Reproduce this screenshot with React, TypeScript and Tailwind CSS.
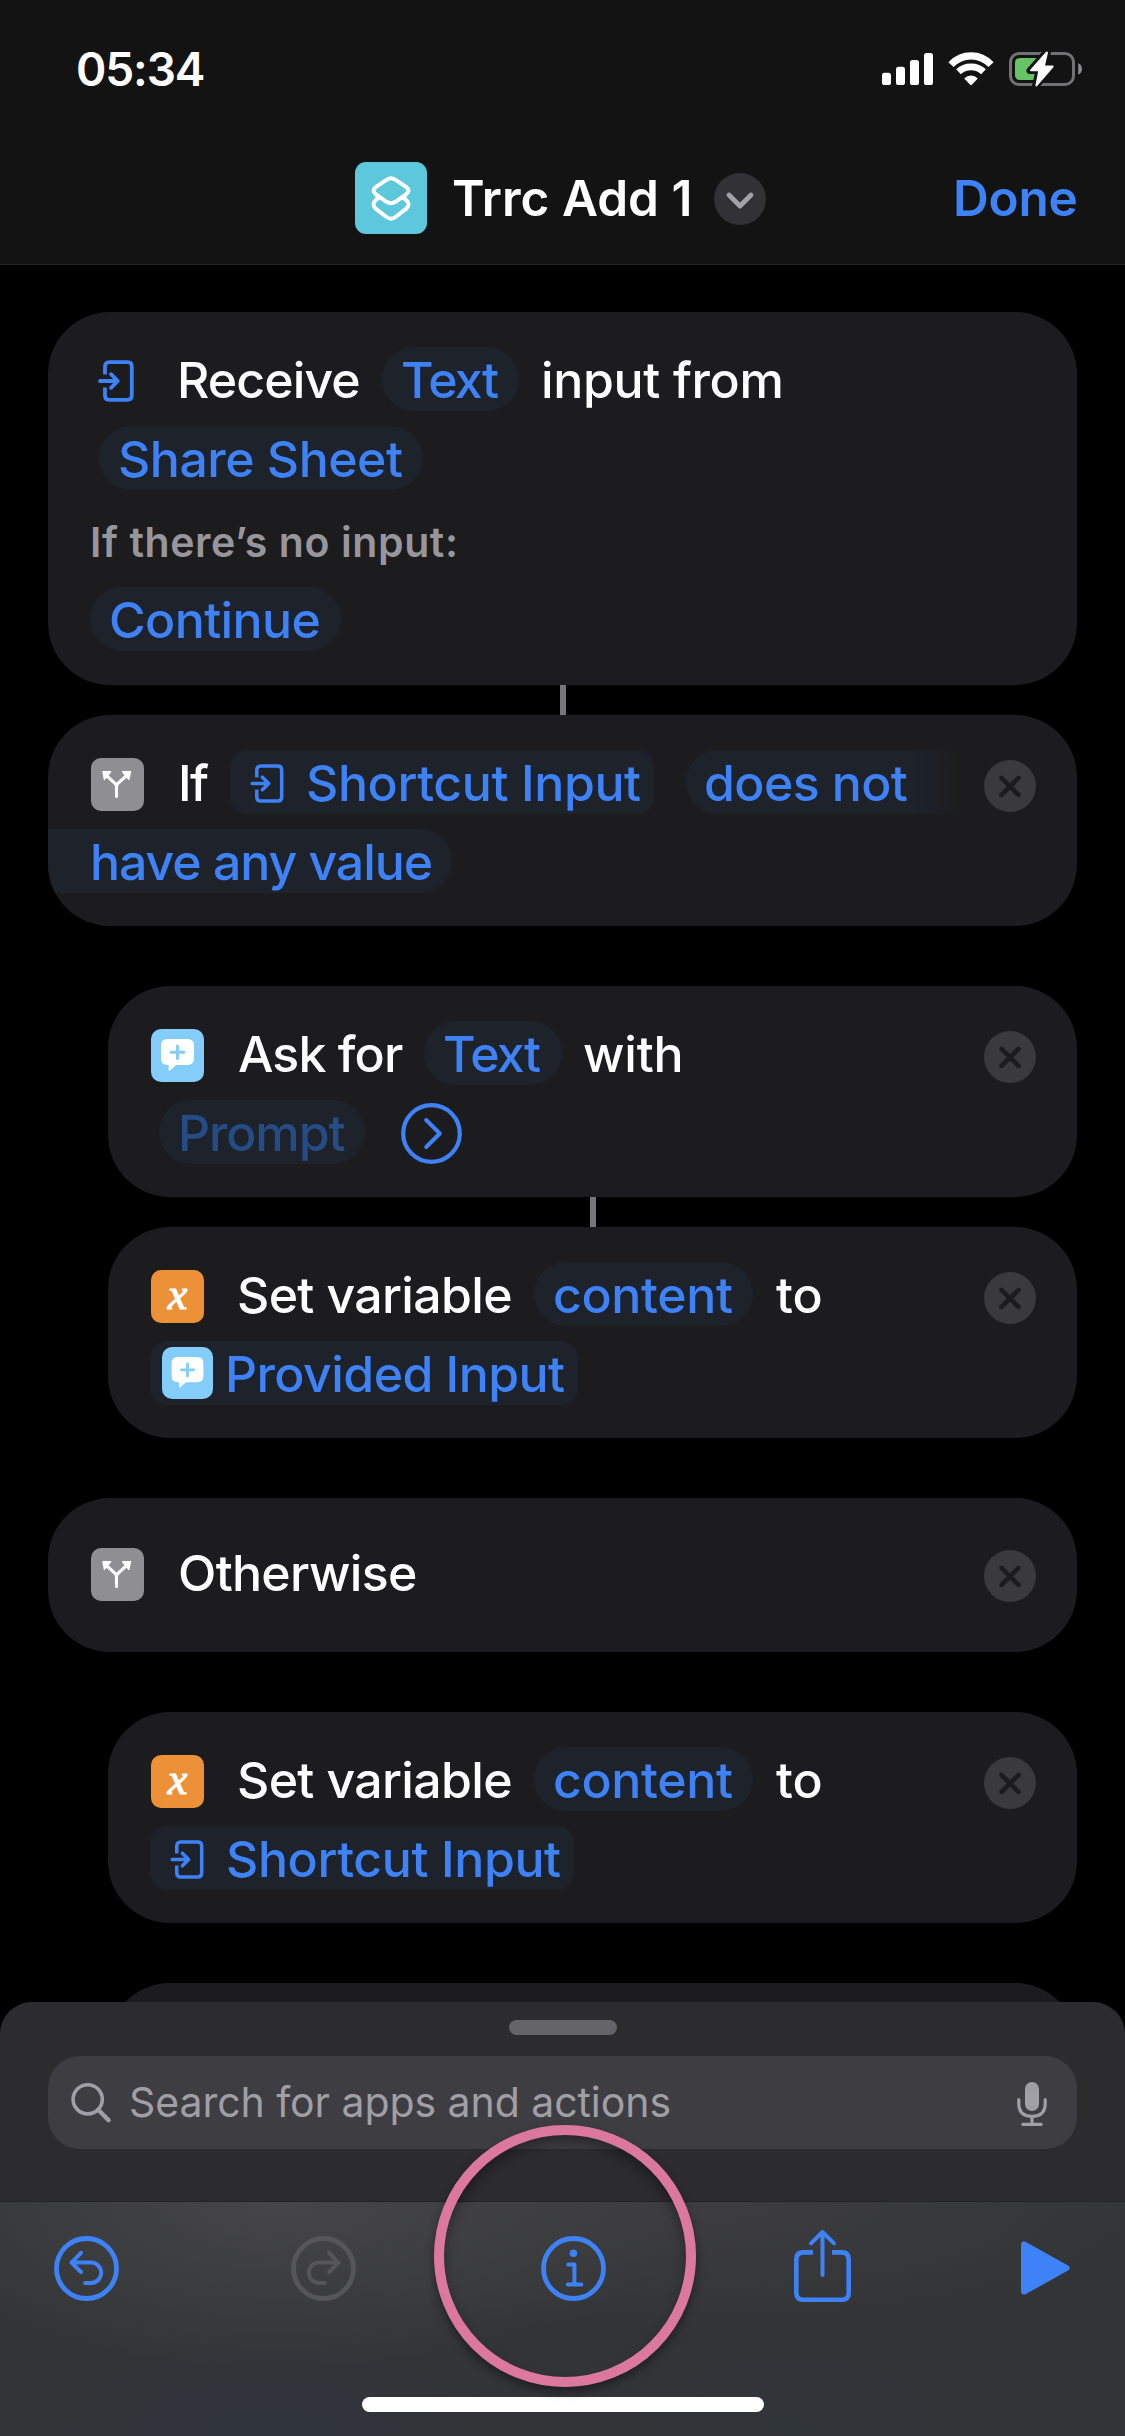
import type { ReactNode } from 'react';

/* ---------- glyphs ---------- */

function InputGlyph({ className }: { className: string }) {
  return (
    <svg viewBox="0 0 36 42" fill="none" stroke="#3e82f7" strokeWidth="3.8" strokeLinecap="round" strokeLinejoin="round" className={className}>
      <path d="M7 14.5V6.5Q7 2.2 11.3 2.2H29.5Q33.8 2.2 33.8 6.5V35.5Q33.8 39.8 29.5 39.8H11.3Q7 39.8 7 35.5V27.5" strokeLinecap="butt" />
      <path d="M2 21H19M13 14.2L19.8 21L13 27.8" />
    </svg>
  );
}

function BranchTile() {
  return (
    <svg viewBox="0 0 53 53" className="mt-[5px] h-[53px] w-[53px] shrink-0 rounded-[10px] bg-[#8e8e93]">
      <path d="M25.5 38.5V28.5Q25.3 26.8 24 25.4L16.5 18.5M25.5 28.5Q25.7 26.8 27 25.4L34.5 18.5" fill="none" stroke="#fff" strokeWidth="3.1" strokeLinecap="round" />
      <path d="M12 13.8H19.6L13.4 21.4Z M39.5 13.8H31.6L37.8 21.4Z" fill="#fff" stroke="#fff" strokeWidth="1.4" strokeLinejoin="round" />
    </svg>
  );
}

function AskTile({ className }: { className: string }) {
  return (
    <svg viewBox="0 0 53 53" className={className}>
      <path d="M16.5 10H36.5Q43 10 43 16.5V29.5Q43 36 36.5 36H25L19 41.4Q17.6 42.4 17.6 40.6V36H16.5Q10 36 10 29.5V16.5Q10 10 16.5 10Z" fill="#fff" />
      <path d="M26.5 17V29.6M20.2 23.3H32.8" stroke="#84cdfb" strokeWidth="3" strokeLinecap="round" />
    </svg>
  );
}

function VariableTile() {
  return (
    <span className="mt-[5px] flex h-[53px] w-[53px] shrink-0 items-center justify-center rounded-[10px] bg-[#ec9138] pb-1 font-['Liberation_Serif',serif] text-[44px] leading-[44px] font-normal text-white italic [-webkit-text-stroke:1.2px_white]">
      x
    </span>
  );
}

function CloseButton() {
  return (
    <svg viewBox="0 0 52 52" className="mt-2 mr-[41px] ml-auto h-[52px] w-[52px] shrink-0">
      <circle cx="26" cy="26" r="26" fill="#3a3a3d" />
      <path d="M17.5 17.9L34.5 34.9M34.5 17.9L17.5 34.9" stroke="#1c1c1e" strokeWidth="4.6" strokeLinecap="round" />
    </svg>
  );
}

/* ---------- building blocks ---------- */

function Card({ className = '', children }: { className?: string; children?: ReactNode }) {
  return <section className={`flex flex-col gap-[15px] overflow-hidden rounded-[62px] bg-[#1c1c1e] pt-[35px] ${className}`}>{children}</section>;
}

function Row({ className = '', children }: { className?: string; children: ReactNode }) {
  return <div className={`flex h-16 items-center ${className}`}>{children}</div>;
}

function Label({ className, children }: { className: string; children: ReactNode }) {
  return <span className={`h-16 shrink-0 leading-[66px] ${className}`}>{children}</span>;
}

function Pill({ className, children }: { className: string; children: ReactNode }) {
  return <span className={`flex h-16 shrink-0 items-center bg-[#1d222b] pt-[2px] leading-[62px] text-[#3e82f7] ${className}`}>{children}</span>;
}

function Connector({ className }: { className: string }) {
  return <div className={`h-[30px] w-[6px] bg-[#76767b] ${className}`} />;
}

/* ---------- page sections ---------- */

function Header() {
  return (
    <header className="flex h-[265px] shrink-0 flex-col border-b border-[#242425] bg-[#131313] pt-[39px]">
      <div className="flex h-[60px] pl-[76px]">
        <span className="w-[806px] text-[46px] leading-[60px] font-[560] tracking-[-1.1px]">05:34</span>
        <svg viewBox="0 0 52 36" className="mt-3 h-9 w-[52px]" fill="#fff">
          <rect x="0" y="21.7" width="9" height="12.3" rx="2.6" />
          <rect x="14" y="15.7" width="9" height="18.3" rx="2.6" />
          <rect x="28" y="9" width="9" height="25" rx="2.6" />
          <rect x="42" y="2" width="9" height="32" rx="2.6" />
        </svg>
        <svg viewBox="0 0 46 34" className="mt-[13px] ml-[14px] h-[34px] w-[46px]" fill="none" stroke="#fff">
          <path d="M3 12.6Q11.3 3.8 23 3.8T43 12.6" strokeWidth="7.2" />
          <path d="M10.5 19.8Q15.6 14.8 23 14.8T35.5 19.8" strokeWidth="6.8" />
          <path d="M16.2 26.6Q19 23.6 23 23.6T29.8 26.6L23.8 32.8Q23 33.5 22.2 32.8Z" fill="#fff" stroke="none" />
        </svg>
        <svg viewBox="0 0 76 40" className="mt-[10px] ml-[14px] h-10 w-[76px]">
          <rect x="2.5" y="4.5" width="63" height="31" rx="8.5" fill="none" stroke="#727274" strokeWidth="3" />
          <path d="M70.2 14.2Q74 16 74 20T70.2 25.8Z" fill="#8a8a8c" />
          <path d="M12 9H30V31H12Q7 31 7 26V14Q7 9 12 9Z" fill="#66c466" />
          <path d="M38.6 3L22 21.6H31L27.6 36.8L45.6 17.4H36.2L39.4 3.4Z" fill="#fff" stroke="#131313" strokeWidth="7" strokeLinejoin="round" />
          <path d="M38.6 3.6L23 21.3H31.4L28.4 36.4L44.6 17.6H35.8L39 3.6Z" fill="#fff" stroke="#fff" strokeWidth="2" strokeLinejoin="round" />
        </svg>
      </div>
      <div className="mt-[63px] flex h-[72px] items-center pl-[355px] text-[49.5px] leading-[74px] font-semibold whitespace-nowrap">
        <svg viewBox="0 0 72 72" className="h-[72px] w-[72px] shrink-0 rounded-[11px] bg-[#5dc8dc]" fill="none" stroke="#fff" strokeWidth="4" strokeLinejoin="round">
          <path d="M31.5 17.8Q36 14.8 40.5 17.8L51 24.8Q56 28.5 51 32.5L40.5 39.8Q36 42.6 31.5 39.8L21 32.5Q16 28.5 21 24.8Z" />
          <path d="M24.5 35.2L20.6 38.2Q16.3 42.2 20.6 46.6L31.5 55Q36 58.4 40.5 55L51.4 46.6Q55.7 42.2 51.4 38.2L47.5 35.2" />
        </svg>
        <span className="ml-[25px] w-[262px] shrink-0 font-[570]">Trrc Add 1</span>
        <svg viewBox="0 0 52 52" className="mt-[2px] h-[52px] w-[52px] shrink-0">
          <circle cx="26" cy="26" r="26" fill="#323236" />
          <path d="M15 22L26 33L37 22" fill="none" stroke="#a2a1a7" strokeWidth="4.8" strokeLinecap="round" strokeLinejoin="round" />
        </svg>
        <span className="ml-[187px] h-[74px] font-[580] tracking-[-0.2px] text-[#3e82f7]">Done</span>
      </div>
    </header>
  );
}

function Flow() {
  return (
    <main className="flex h-[1737px] shrink-0 flex-col overflow-hidden px-12 pt-[47px] text-[50px] font-medium whitespace-nowrap">
      <Card className="h-[373px] shrink-0">
        <Row className="pl-[50px]">
          <InputGlyph className="mt-[4px] mr-[43px] h-[42px] w-9 shrink-0" />
          <Label className="w-[205px] tracking-[-0.9px]">Receive</Label>
          <Pill className="w-[137px] rounded-[32px] pl-[19px] tracking-[-1.6px]">Text</Pill>
          <Label className="ml-[22px] tracking-[-0.35px]">input from</Label>
        </Row>
        <Row className="pl-[51px]">
          <Pill className="w-[324px] rounded-[32px] pl-[19px] tracking-[-0.5px]">Share Sheet</Pill>
        </Row>
        <div className="h-[67px] pl-[42px] text-[41px] leading-[75px] font-semibold tracking-[0.6px] text-[#97969c]">If there’s no input:</div>
        <Row className="pl-[42px]">
          <Pill className="w-[251px] rounded-[32px] pl-[19px] tracking-[-0.6px]">Continue</Pill>
        </Row>
      </Card>
      <Connector className="ml-[512px] shrink-0" />
      <Card className="h-[211px] shrink-0">
        <Row className="pl-[43px]">
          <BranchTile />
          <Label className="ml-[34px] w-[52px] tracking-[-1.6px]">If</Label>
          <Pill className="w-[424px] rounded-[17px] pl-5 tracking-[-0.4px]">
            <InputGlyph className="mr-[22px] h-[39px] w-[34px] shrink-0" />
            Shortcut Input
          </Pill>
          <Pill className="ml-8 w-[276px] rounded-l-[32px] bg-transparent bg-linear-to-r from-[#1d222b] from-82% to-[#1c1c1e] pl-[18px] tracking-[-0.6px]">does not</Pill>
          <CloseButton />
        </Row>
        <Row>
          <Pill className="w-[404px] rounded-r-[32px] pl-[42px] tracking-[-1.05px]">have any value</Pill>
        </Row>
      </Card>
      <Card className="mt-[60px] ml-[60px] h-[211px] shrink-0">
        <Row className="pl-[43px]">
          <AskTile className="mt-[5px] h-[53px] w-[53px] shrink-0 rounded-[10px] bg-[#84cdfb]" />
          <Label className="ml-[34px] w-[186px] tracking-[-0.9px]">Ask for</Label>
          <Pill className="w-[138px] rounded-[32px] pl-[19px] tracking-[-1.6px]">Text</Pill>
          <Label className="ml-[21px] tracking-[-0.2px]">with</Label>
          <CloseButton />
        </Row>
        <Row className="pl-[51px]">
          <Pill className="w-[206px] rounded-[32px] pl-[19px] tracking-[-1.1px]">
            <span className="text-[#264c85]">Prompt</span>
          </Pill>
          <svg viewBox="0 0 61 61" className="mt-[2px] ml-9 h-[61px] w-[61px]" fill="none" stroke="#3e82f7" strokeLinecap="round" strokeLinejoin="round">
            <circle cx="30.5" cy="30.5" r="28.3" strokeWidth="4.2" />
            <path d="M25.2 17L38.8 30.5L25.2 44" strokeWidth="4" />
          </svg>
        </Row>
      </Card>
      <Connector className="ml-[542px] shrink-0" />
      <Card className="ml-[60px] h-[211px] shrink-0">
        <SetVariableRow />
        <Row className="pl-[42px]">
          <Pill className="w-[428px] rounded-[17px] pl-3 tracking-[-0.55px]">
            <AskTile className="-mt-[2px] mr-3 h-[52px] w-[51px] shrink-0 rounded-[10px] bg-[#84cdfb]" />
            Provided Input
          </Pill>
        </Row>
      </Card>
      <Card className="mt-[60px] h-[154px] shrink-0 pt-[42px]!">
        <Row className="pl-[43px]">
          <BranchTile />
          <Label className="ml-[34px] tracking-[-0.7px]">Otherwise</Label>
          <CloseButton />
        </Row>
      </Card>
      <Card className="mt-[60px] ml-[60px] h-[211px] shrink-0">
        <SetVariableRow />
        <Row className="pl-[42px]">
          <Pill className="w-[424px] rounded-[17px] pl-5 tracking-[-0.4px]">
            <InputGlyph className="mr-[22px] h-[39px] w-[34px] shrink-0" />
            Shortcut Input
          </Pill>
        </Row>
      </Card>
      <Card className="mt-[60px] ml-[60px] h-[211px] shrink-0" />
    </main>
  );
}

function SetVariableRow() {
  return (
    <Row className="pl-[43px]">
      <VariableTile />
      <Label className="ml-[33px] w-[297px] tracking-[-0.65px]">Set variable</Label>
      <Pill className="w-[219px] rounded-[32px] pl-[19px] tracking-[-0.35px]">content</Pill>
      <Label className="ml-[23px]">to</Label>
      <CloseButton />
    </Row>
  );
}

function SearchSheet() {
  return (
    <div className="flex h-[199px] shrink-0 flex-col rounded-t-[32px] bg-[#2c2c2e] px-12 pt-[18px]">
      <div className="h-[15px] w-[108px] self-center rounded-full bg-[#656469]" />
      <div className="mt-[21px] flex h-[93px] shrink-0 items-center rounded-[32px] bg-[#3e3d42] text-[41px] leading-[93px] whitespace-nowrap text-[#a09fa6]">
        <svg viewBox="0 0 42 42" className="ml-[22px] h-[42px] w-[42px] shrink-0" fill="none" stroke="#a09fa6" strokeWidth="3.6">
          <circle cx="17.7" cy="17.3" r="14.6" />
          <path d="M28.3 27.8L38.6 38.2" strokeWidth="4.4" strokeLinecap="round" />
        </svg>
        <span className="ml-[17px] tracking-[-0.06px]">Search for apps and actions</span>
        <svg viewBox="0 0 30 44" className="mt-[3px] mr-[30px] ml-auto h-11 w-[30px]" fill="none" stroke="#a09fa6" strokeWidth="3.2" strokeLinecap="round">
          <rect x="8" y="0" width="14" height="29" rx="7" fill="#a09fa6" stroke="none" />
          <path d="M1.8 17.6V21.6Q1.8 34.4 15 34.4T28.2 21.6V17.6M15 34.6V42M5.8 42.3H24.2" />
        </svg>
      </div>
    </div>
  );
}

function Toolbar() {
  return (
    <footer className="flex h-[235px] shrink-0 flex-col border-t border-[#242426] bg-[#333436] bg-[radial-gradient(ellipse_420px_170px_at_280px_0px,#464648_0%,#46464800_100%),radial-gradient(ellipse_500px_130px_at_700px_0px,#3d3d3f_0%,#3d3d3f00_100%),radial-gradient(ellipse_300px_130px_at_270px_234px,#30353d_0%,#30353d00_100%),radial-gradient(ellipse_260px_130px_at_790px_225px,#30353a_0%,#30353a00_100%)]">
      <div className="flex h-[132px] items-center pl-[54px]">
        <svg viewBox="0 0 65 65" className="h-[65px] w-[65px]" fill="none" stroke="#3e82f7" strokeLinecap="round" strokeLinejoin="round">
          <circle cx="32.5" cy="32.5" r="30" strokeWidth="4.8" />
          <path d="M27 16.8L17.5 26.6L27 36M18.5 26.6H37A10.2 10.2 0 0 1 37 47H31.2" strokeWidth="4" />
        </svg>
        <svg viewBox="0 0 65 65" className="ml-[172px] h-[65px] w-[65px]" fill="none" stroke="#565658" strokeLinecap="round" strokeLinejoin="round">
          <circle cx="32.5" cy="32.5" r="30" strokeWidth="4.8" />
          <path d="M38 16.8L47.5 26.6L38 36M46.5 26.6H28A10.2 10.2 0 0 0 28 47H33.8" strokeWidth="4" />
        </svg>
        <svg viewBox="0 0 65 65" className="ml-[185px] h-[65px] w-[65px]" fill="none" stroke="#3e82f7" strokeLinecap="round" strokeLinejoin="round">
          <circle cx="32.5" cy="32.5" r="30" strokeWidth="4.8" />
          <circle cx="32.4" cy="17.2" r="3.8" fill="#3e82f7" stroke="none" />
          <path d="M27.2 28.6H33.4V48.4M26.8 48.6H40.4" strokeWidth="4" />
        </svg>
        <svg viewBox="0 0 57 74" className="-mt-[5px] ml-[188px] h-[74px] w-[57px]" fill="none" stroke="#3e82f7" strokeWidth="4.6" strokeLinecap="round" strokeLinejoin="round">
          <path d="M19 23.4H9.3Q2.3 23.4 2.3 30.4V63.7Q2.3 70.7 9.3 70.7H47.7Q54.7 70.7 54.7 63.7V30.4Q54.7 23.4 47.7 23.4H38" strokeLinecap="butt" />
          <path d="M28.5 46V3.4M17 14.4L28.5 3L40 14.4" strokeWidth="4" />
        </svg>
        <svg viewBox="0 0 49 54" className="ml-[170px] h-[54px] w-[49px]" fill="#3e82f7" stroke="#3e82f7" strokeWidth="6" strokeLinejoin="round">
          <path d="M3 3.4V50.6L45.6 27Z" />
        </svg>
      </div>
      <div className="mt-[63px] h-[15px] w-[402px] self-center rounded-full bg-white" />
    </footer>
  );
}

export default function App() {
  return (
    <div className="relative flex h-[2436px] w-[1125px] flex-col overflow-hidden bg-black font-['Inter',sans-serif] text-white">
      <Header />
      <Flow />
      <SearchSheet />
      <Toolbar />
      <div className="absolute top-[2125px] left-[434px] h-[262px] w-[262px] rounded-full border-[10px] border-[#dd789d] shadow-[0_5px_10px_rgba(0,0,0,0.4),inset_0_7px_12px_rgba(0,0,0,0.35)]" />
    </div>
  );
}
